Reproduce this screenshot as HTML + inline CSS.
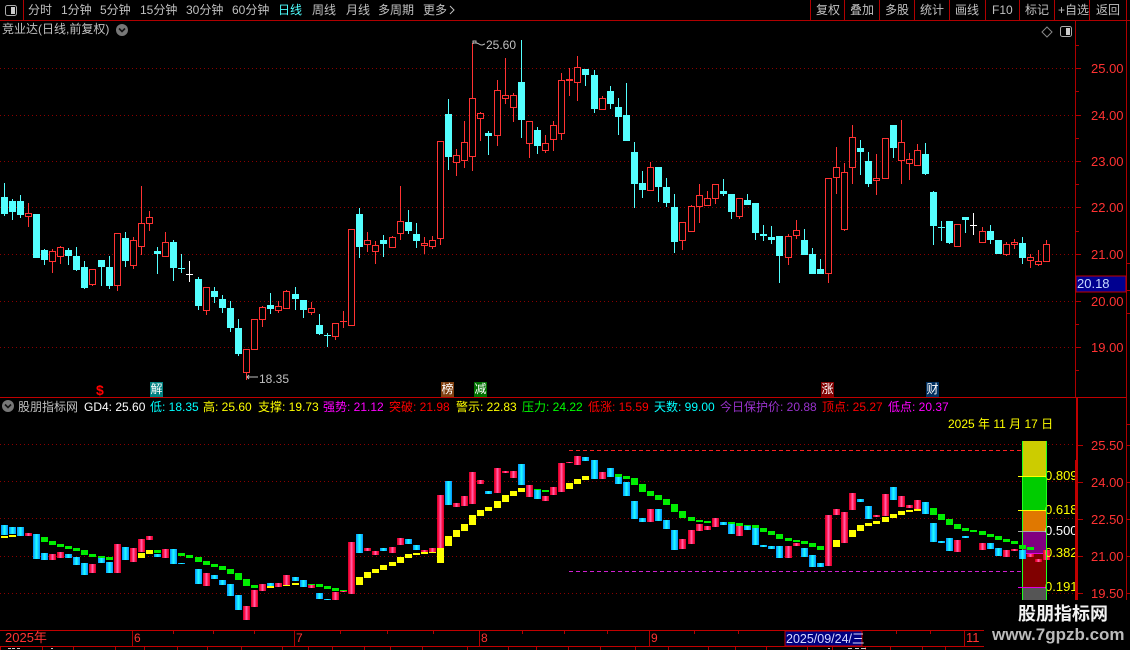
<!DOCTYPE html>
<html><head><meta charset="utf-8"><style>
html,body{margin:0;padding:0;background:#000;overflow:hidden}
#r{position:relative;width:1130px;height:650px;background:#000;overflow:hidden;font:12px/14px "Liberation Sans","WenQuanYi Zen Hei","Noto Sans CJK SC",sans-serif;color:#c0c0c0}
#r span{position:absolute;white-space:pre}
svg{position:absolute;left:0;top:0}
.m{width:13px;height:15px;top:382px;text-align:center;color:#fff;line-height:15px}
.a{color:#ff3232;font-size:13px}
.f{color:#ff0;font-size:13px}
.d{color:#ff3232;top:631px}
</style></head><body><div id="r">
<svg id="s" width="1130" height="650" shape-rendering="crispEdges">
<defs>
<linearGradient id="gr"><stop offset="0" stop-color="#d00028"/><stop offset=".25" stop-color="#ff1048"/><stop offset=".5" stop-color="#ff69b4"/><stop offset=".75" stop-color="#ff1048"/><stop offset="1" stop-color="#d00028"/></linearGradient>
<linearGradient id="gc"><stop offset="0" stop-color="#0090ff"/><stop offset=".5" stop-color="#20ffff"/><stop offset="1" stop-color="#0090ff"/></linearGradient>
</defs>
<g id="g"></g>
<g stroke="#b00000" fill="none">
<path d="M0 20.5H1130M23.5 0V20M810.5 0V20M844.5 0V20M879.5 0V20M914.5 0V20M949.5 0V20M985.5 0V20M1019.5 0V20M1054.5 0V20M1089.5 0V20M1126.5 0V600M1075.5 20V397"/>
<path d="M0 397.5H1126M0 630.5H1130M0 646.5H1130M1076.5 397V600M1077.5 397V600" stroke="#c00000"/>
<path d="M1076 68.5h5M1076 115.5h5M1076 161.5h5M1076 207.5h5M1076 254.5h5M1076 301.5h5M1076 347.5h5M1078 445.5h5M1078 482.5h5M1078 519.5h5M1078 556.5h5M1078 593.5h5M1076 45.5h3M1076 91.5h3M1076 138.5h3M1076 184.5h3M1076 231.5h3M1076 324.5h3M1076 370.5h3M1127 263.5h3M1127 290.5h3M1127 313.5h3M1127 424.5h3M1127 445.5h3M1127 482.5h3M1127 519.5h3M1127 556.5h3M1127 593.5h3"/>
<path d="M132.5 631V646M294.5 631V646M479.5 631V646M649.5 631V646M964.5 631V646M173.5 631v3M213.5 631v3M254.5 631v3M340.5 631v3M387.5 631v3M433.5 631v3M522.5 631v3M564.5 631v3M607.5 631v3M694.5 631v3M738.5 631v3M896.5 631v3M930.5 631v3M0.5 647v3M42.5 647v3M73.5 647v3M115.5 647v3M144.5 647v3M177.5 647v3M207.5 647v3M241.5 647v3M282.5 647v3M308.5 647v3M332.5 647v3M364.5 647v3M390.5 647v3M422.5 647v3M467.5 647v3M508.5 647v3M536.5 647v3M568.5 647v3M600.5 647v3M635.5 647v3M668.5 647v3M708.5 647v3M735.5 647v3M766.5 647v3M807.5 647v3M832.5 647v3M865.5 647v3M890.5 647v3M922.5 647v3M945.5 647v3"/>
</g>
<rect x="1076" y="276" width="50" height="16" fill="#000090" stroke="#c00000"/>
<rect x="785" y="631" width="77" height="15" fill="#000080" stroke="#c00000"/>
<path d="M8 648.5h3M12 648.5h3M17 648.5h3M51 648.5h2M828 648.5h2M848 648.5h4M855 648.5h4M861 648.5h5" stroke="#ccc" fill="none"/>
<g fill="none" stroke="#999" shape-rendering="auto">
<rect x="5.5" y="5.5" width="11" height="10" rx="2" stroke="#aaa"/><rect x="11" y="7" width="4" height="7" fill="#ccc" stroke="none"/>
<rect x="1060.5" y="26.5" width="11" height="10" rx="2" stroke="#aaa"/><rect x="1066" y="28" width="4" height="7" fill="#ccc" stroke="none"/>
<path d="M1047 27l5 5-5 5-5-5z" stroke="#888"/>
<circle cx="122" cy="30" r="6" fill="#777" stroke="none"/><path d="M119 28.5l3 3 3-3" stroke="#111" stroke-width="1.6"/>
<circle cx="8" cy="406" r="6" fill="#777" stroke="none"/><path d="M5 404.5l3 3 3-3" stroke="#111" stroke-width="1.6"/>
<path d="M450 6l4 4-4 4" stroke="#c0c0c0"/>
<path d="M473 44V41h3v2h-3M476 43c3 0 3 2 6 2 1 0 2-1 3-1" stroke="#c0c0c0"/>
<path d="M258 377h-11M247 377l2-2M247 377l2 2" stroke="#c0c0c0"/>
</g>
</svg>

<span style="left:28px;top:3px">分时</span><span style="left:61px;top:3px">1分钟</span><span style="left:100px;top:3px">5分钟</span><span style="left:140px;top:3px">15分钟</span><span style="left:186px;top:3px">30分钟</span><span style="left:232px;top:3px">60分钟</span><span style="left:278px;top:3px;color:#4fffff">日线</span><span style="left:312px;top:3px">周线</span><span style="left:346px;top:3px">月线</span><span style="left:378px;top:3px">多周期</span><span style="left:423px;top:3px">更多</span>
<span style="left:816px;top:3px">复权</span><span style="left:850px;top:3px">叠加</span><span style="left:885px;top:3px">多股</span><span style="left:920px;top:3px">统计</span><span style="left:955px;top:3px">画线</span><span style="left:992px;top:3px">F10</span><span style="left:1025px;top:3px">标记</span><span style="left:1058px;top:3px">+自选</span><span style="left:1096px;top:3px">返回</span>
<span style="left:2px;top:22px">竞业达(日线,前复权)</span>
<span style="left:486px;top:38px">25.60</span><span style="left:259px;top:372px">18.35</span>

<span class="a" style="left:1091px;top:62px">25.00</span><span class="a" style="left:1091px;top:109px">24.00</span><span class="a" style="left:1091px;top:155px">23.00</span><span class="a" style="left:1091px;top:201px">22.00</span><span class="a" style="left:1091px;top:248px">21.00</span><span class="a" style="left:1091px;top:295px">20.00</span><span class="a" style="left:1091px;top:341px">19.00</span>
<span style="left:1077px;top:277px;color:#c8d8ff;font-size:13px">20.18</span>
<span class="a" style="left:1091px;top:439px">25.50</span><span class="a" style="left:1091px;top:476px">24.00</span><span class="a" style="left:1091px;top:513px">22.50</span><span class="a" style="left:1091px;top:550px">21.00</span><span class="a" style="left:1091px;top:587px">19.50</span>

<span style="left:96px;top:383px;color:#f00;font-weight:bold;font-size:14px">$</span>
<span class="m" style="left:150px;background:#008080">解</span><span class="m" style="left:441px;background:#804010">榜</span><span class="m" style="left:474px;background:#007000">减</span><span class="m" style="left:821px;background:#800000">涨</span><span class="m" style="left:926px;background:#003060">财</span>

<span style="left:18px;top:400px">股朋指标网</span><span style="left:84px;top:400px;color:#fff">GD4: 25.60</span><span style="left:150px;top:400px;color:#0ff">低: 18.35</span><span style="left:203px;top:400px;color:#ff0">高: 25.60</span><span style="left:258px;top:400px;color:#ff0">支撑: 19.73</span><span style="left:323px;top:400px;color:#f0f">强势: 21.12</span><span style="left:389px;top:400px;color:#f00">突破: 21.98</span><span style="left:456px;top:400px;color:#ff0">警示: 22.83</span><span style="left:522px;top:400px;color:#0f0">压力: 24.22</span><span style="left:588px;top:400px;color:#f00">低涨: 15.59</span><span style="left:654px;top:400px;color:#0ff">天数: 99.00</span><span style="left:720px;top:400px;color:#9932cc">今日保护价: 20.88</span><span style="left:822px;top:400px;color:#f00">顶点: 25.27</span><span style="left:888px;top:400px;color:#f0f">低点: 20.37</span>
<span style="left:948px;top:417px;color:#ff0">2025 年 11 月 17 日</span>

<span class="f" style="left:1045px;top:469px">0.809</span><span class="f" style="left:1045px;top:503px">0.618</span><span style="left:1045px;top:524px;color:#fff;font-size:13px">0.500</span><span class="f" style="left:1045px;top:546px">0.382</span><span class="f" style="left:1045px;top:580px">0.191</span>
<div style="position:absolute;left:1046px;top:441px;width:1px;height:159px;background:#20ff20"></div>
<div style="position:absolute;left:1075px;top:460px;width:3px;height:140px;background:#c00000"></div>

<span class="d" style="left:5px;font-size:13px">2025年</span><span class="d" style="left:134px">6</span><span class="d" style="left:296px">7</span><span class="d" style="left:481px">8</span><span class="d" style="left:651px">9</span><span class="d" style="left:966px;font-size:13px">11</span>
<span style="left:786px;top:632px;color:#d8d8ff;font-size:12.5px">2025/09/24/三</span>

<div style="position:absolute;left:984px;top:600px;width:146px;height:50px;background:#000"></div>
<span style="left:1018px;top:603px;color:#f2f2f2;font-size:18px;line-height:22px;font-weight:bold">股朋指标网</span>
<span style="left:992px;top:626px;color:#bbb;font-size:17px;line-height:18px;font-weight:bold">www.7gpzb.com</span>

<script>
(function(){
var jumps=[12,24,36,48,61,73,85,97,109,121];
function col(i){var n=0;jumps.forEach(function(j){if(i>=j)n++});return 4+8*i+n}
var M=[
[170,"c 81 132 39 138;c 93 126 87 150;c 93 135 75 144;r 129 141 99 171;c 132 264 132 264;c 240 270 237 285;r 243 276 237 309;r 231 261 228 282;c 240 258 234 285;c 258 300 231 303;c 291 354 273 357;r 297 345 297 348;c 270 291 270 348;c 291 348 258 357;r 189 348 189 363;c 204 273 186 291;r 210 288 201 297;r 159 231 48 255;r 141 161 123 183;c 243 252 231 312;r 216 261 186 261;c 216 294 210 333;c 294 297 252 309;w 312 315 273 336;c 327 408 321 420;r 351 423 351 435;c 363 381 351 399;c 387 414 375 429;c 414 474 393 486;c 474 552 447 558;r 537 609 537 630;r 447 540 447 540;r 411 450 408 471;c 405 417 369 432;r 408 423 393 429;r 363 417 360 417;c 372 387 351 420;c 390 420 390 444;r 414 429 396 435;c 465 492 432 495;c 495 497 489 531;r 459 501 459 510;r 453 456 423 474;r 177 468 177 468;c 132 231 114 264;r 210 225 186 246"],
[30,"r 645 666 633 702;c 630 642 615 681;r 621 654 618 654;r 573 612 468 630;c 576 603 540 612;c 612 633 579 654;r 639 648 621 672;r 630 651 618 657;r 333 627 333 645;c 252 381 207 420;r 375 399 357 438;r 336 393 273 414;r 204 381 40 423;r 249 267 246 333;c 309 318 303 375;r 180 318 150 348;r 195 207 84 222;r 195 234 189 276;c 156 270 30 324;r 273 342 273 384;c 300 348 291 372;r 339 363 315 369;r 285 330 273 363;r 150 312 129 330;r 147 153 115 198;r 111 159 78 213;c 117 135 117 168;c 135 237 120 249;r 204 240 198 240;c 183 222 168 237;c 231 261 204 315;c 255 333 159 333;c 366 462 336 534;c 459 480 423 504;r 411 483 396 483;c 411 471 411 516;c 471 519 444 531;c 531 636 492 669;r 576 633 576 660;r 528 606 525 606;r 495 531 462 579;r 504 528 483 528;r 462 507 462 522;c 483 492 447 498"],
[110,"c 252 306 252 327;r 264 321 264 327;c 270 285 252 285;c 279 369 279 390;c 372 378 345 393;c 381 390 348 402;c 378 438 378 519;r 378 444 372 465;r 360 378 330 387;c 390 435 357 435;c 432 492 414 492;c 477 492 447 492;r 204 492 204 519;r 171 204 111 252;r 186 360 159 363;r 81 174 45 222;c 114 126 90 195;c 153 222 126 231;r 204 213 132 255;r 84 207 84 207;c 45 114 45 144;r 96 153 30 222;r 147 162 129 210;r 120 168 102 168;c 132 192 99 195;c 246 348 243 405;c 351 354 333 393;c 333 399 333 402;r 342 411 342 411;c 321 330 321 369;w 345 348 309 375;r 363 399 351 399;c 363 390 345 402;c 390 432 390 432;r 402 435 396 438;r 396 405 387 417;c 399 444 381 462;r 441 453 432 474;r 454 465 420 468;r 402 456 390 456"]
];
var L=[
[500,"c 75 105 y 108 114;c 81 102 y 105 111;c 81 108;r 99 108;c 102 177;c 159 180 g 111 126;r 162 180 g 123 135;r 156 174 g 132 141;c 162 174 g 138 147;c 171 195 g 144 153;c 189 225 g 150 165;r 192 219 g 162 171;c 171 189 g 168 174;c 186 219 g 171 180;r 132 219;c 141 180;r 144 186;r 117 156 y 159 174;r 108 120 y 150 162;c 162 171 g 150 159;r 147 174;c 147 192;c 189 192 g 159 168;- 0 0 g 165 174;c 207 252 g 171 186;r 219 258 g 183 195;c 225 237 g 192 201;c 240 255 g 198 210;c 252 288 g 207 222;c 285 330 g 219 240;r 318 360 g 237 258;r 270 321 g 255 264;r 252 273;c 249 258 y 258 264;r 249 261;r 225 255 y 255 258;c 231 243 y 249 255;c 240 261;r 255 264 g 252 255;c 279 297 g 252 261;c 297 300 g 258 267;r 276 300 g 264 273;r 273 276 g 270 273;r 126 282;c 102 159 y 231 255;r 144 153 y 216 234;r 153 165 y 207 219;c 144 153 y 195 210;r 141 159 y 186 198;r 114 135 y 171 189;c 117 132 y 162 174;c 135 150 y 159 165;r 150 156 y 156 162;r 144 156 y 156 159"],
[455,"r 120 279 y 279 324;c 78 150 y 243 273;r 144 156 y 225 246;r 123 153 y 207 228;r 51 147 y 180 210;r 75 87 y 165 183;c 108 117 y 156 168;r 39 114 y 138 159;r 48 54 y 120 141;r 48 69 y 108 123"],
[440,"c 72 135 y 144 156;r 135 171;c 147 177 g 147 150;r 168 183 g 150 156;r 141 165;r 69 156;r 66 69 y 129 147;r 48 75 y 117 132;c 51 63 y 108 120;c 60 117;r 96 117;c 84 111;c 111 132 g 102 111;c 126 168 g 108 117;c 183 237 g 114 135;c 234 246 g 132 156;r 207 246 g 153 168;c 207 243 g 165 180;c 240 267 g 177 195;c 270 330 g 192 216;r 297 327 g 213 234;r 270 312 g 231 243;r 252 273 g 240 246;r 258 270 g 243 249;r 234 261;c 246 255;c 252 282 g 246 252;r 258 288 g 249 258;c 258 270 g 255 258;c 264 315 g 255 264;c 315 321 g 264 276;c 318 327 g 273 285;c 318 354 g 282 297;r 318 354 g 294 303;r 309 318 g 300 306;c 324 351 g 303 312;c 345 381 g 309 321;c 369 381 g 318 330;r 225 378;r 207 225 y 300 321;r 216 309;r 159 210 y 270 291;c 177 186 y 255 273;c 198 237 y 249 258;r 225 231 y 243 252;r 162 228 y 231 246;c 141 180 y 222 234;r 168 201 y 213 225;r 195 204 y 210 216;r 180 207 y 207 213;c 186 222;c 249 306 g 204 225;c 303 309 g 222 240;c 294 333 g 237 255;r 300 336 g 252 267;c 288 294 g 264 273;- 0 0 g 270 276;r 309 330 g 273 285;c 309 327 g 282 291;c 324 348 g 288 300;r 330 351 g 297 306;r 327 333 g 303 312;c 330 357 g 314 326;r 341 350 g 321 330;r 357 366;r 330 360"]
];
var o=[];
function R(x,y,w,h,f){if(h>0)o.push('<rect x="'+x+'" y="'+y+'" width="'+w+'" height="'+h+'" fill="'+f+'"/>')}
function H(y,x1,x2,c,d){o.push('<path d="M'+x1+' '+(y+.5)+'H'+x2+'" stroke="'+c+'" stroke-dasharray="'+d+'" fill="none"/>')}
[68,115,161,207,254,301,347,444,481,518,556,593].forEach(function(y){H(y,0,1075,'#8a0000','1 3')});
H(450,569,1022,'#ff2020','4 3');H(571,569,1022,'#d020d0','4 3');
var i=0,CY='#54ffff',RD='#ff3232';
M.forEach(function(s){var off=s[0];s[1].split(';').forEach(function(t){var a=t.split(' '),c=col(i),T=Math.round(a[1]/3+off),B=Math.round(a[2]/3+off),wt=Math.round(a[3]/3+off),wb=Math.round(a[4]/3+off),f=a[0]=='c'?CY:a[0]=='w'?'#fff':RD;
R(c,wt,1,wb-wt,f);
if(a[0]=='r'&&B-T>2){o.push('<rect x="'+(c-2.5)+'" y="'+(T+.5)+'" width="6" height="'+(B-T-1)+'" fill="#000" stroke="'+RD+'"/>')}
else R(c-3,T,7,Math.max(B-T,1),f);
i++})});
[[441,35,'#cccc00'],[476,34,'#00cc00'],[510,21,'#e07800'],[531,22,'#800080'],[553,34,'#800000'],[587,13,'#555']].forEach(function(b){R(1023,b[0],23,b[1],b[2])});
R(1022,441,1,159,'#20ff20');
R(1018,476,29,1,'#ff0');R(1018,510,29,1,'#ff0');R(1018,531,29,1,'#aaa');R(1022,553,25,1,'#e000e0');R(1018,587,29,1,'#e000e0');
i=0;
L.forEach(function(s){var off=s[0];s[1].split(';').forEach(function(t){var a=t.split(' '),c=col(i),k=a[0];
if(k!='-'){var T=Math.round(a[1]/3+off),B=Math.round(a[2]/3+off);R(c-3,T,7,B-T,k=='c'?'url(#gc)':'url(#gr)')}
if(a[3]){var lt=Math.round(a[4]/3+off),lb=Math.round(a[5]/3+off);R(c-3,lt,7,lb-lt,a[3]=='g'?'#00ee00':'#ffff00')}
i++})});
document.getElementById('g').innerHTML=o.join('');
})();
</script>
</div></body></html>
